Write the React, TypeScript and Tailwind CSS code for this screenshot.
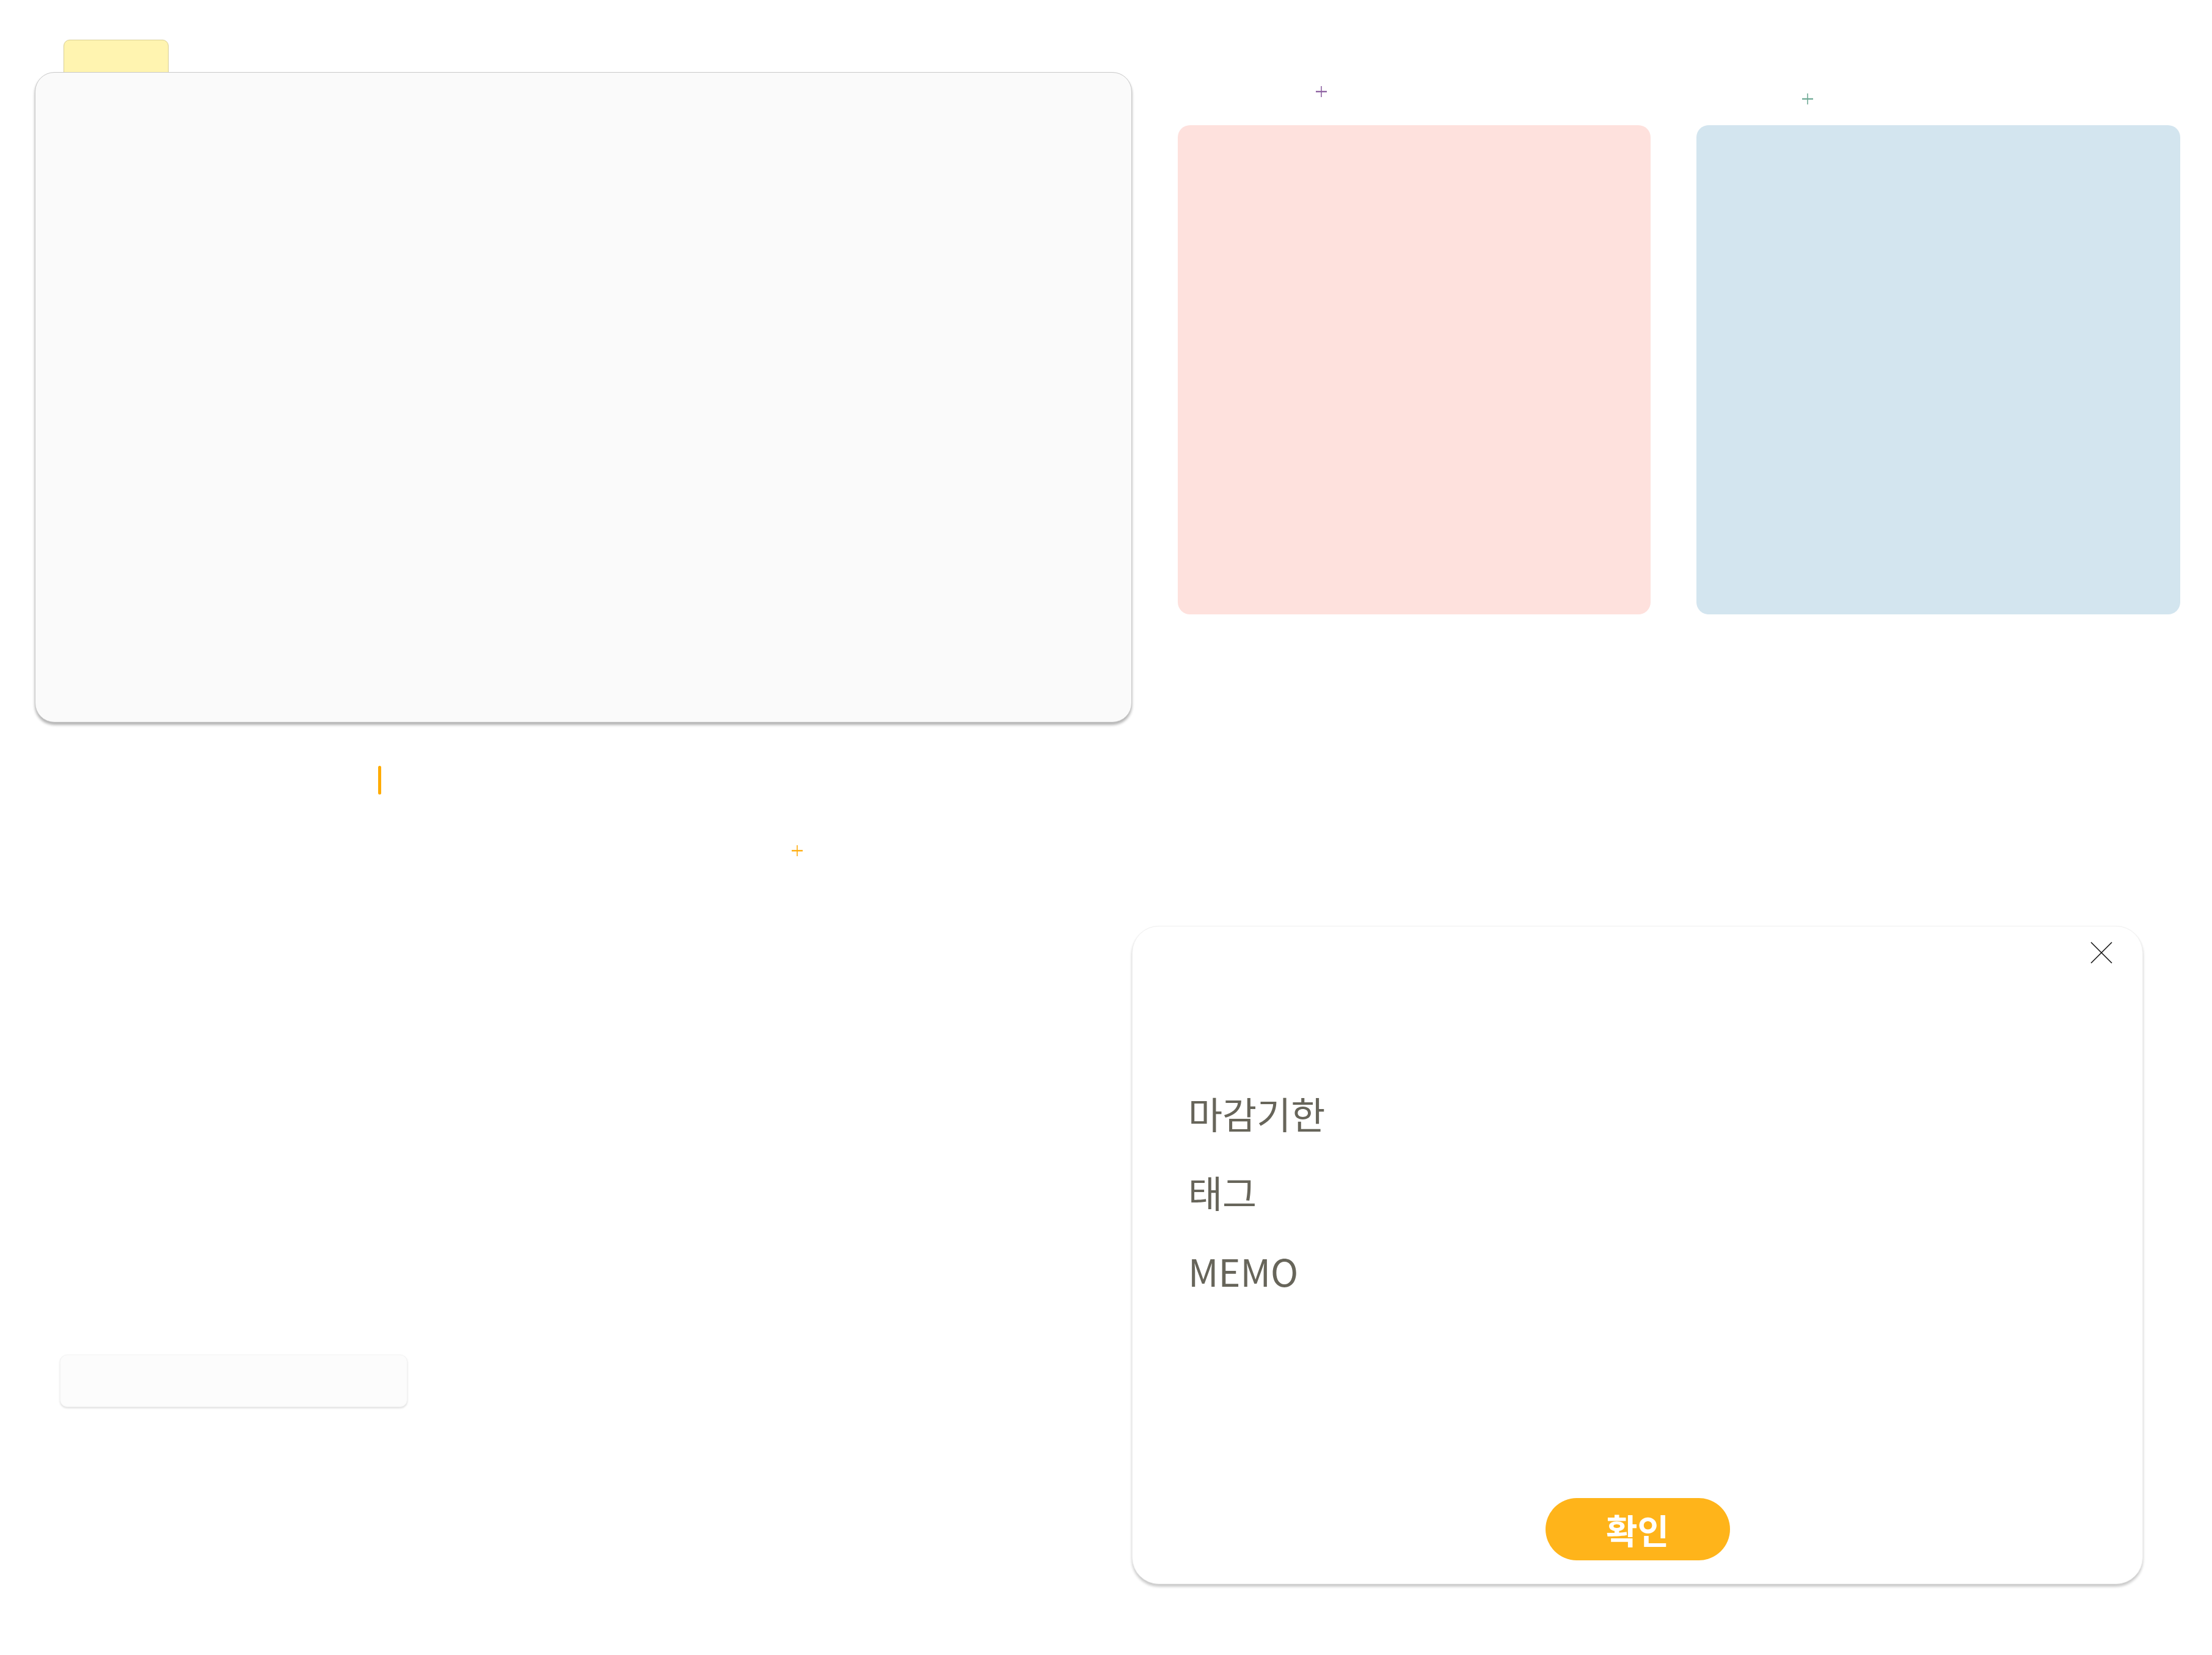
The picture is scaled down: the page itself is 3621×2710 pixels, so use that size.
import React from 'react';

const font = "font-['Noto_Sans_CJK_KR','Noto_Sans',sans-serif]";

const Plus: React.FC<{ color: string }> = ({ color }) => (
  <svg width="18" height="18" viewBox="0 0 18 18" className="block">
    <line x1="9" y1="0" x2="9" y2="18" stroke={color} strokeWidth="1.6" />
    <line x1="0" y1="9" x2="18" y2="9" stroke={color} strokeWidth="2.4" />
  </svg>
);

const CloseIcon: React.FC = () => (
  <svg width="36" height="36" viewBox="0 0 36 36" className="block">
    <line x1="1" y1="1" x2="35" y2="35" stroke="#111" strokeWidth="1.6" />
    <line x1="35" y1="1" x2="1" y2="35" stroke="#111" strokeWidth="1.6" />
  </svg>
);

const MemoModal: React.FC = () => (
  <div className="absolute left-[1853px] top-[1516px] w-[1655px] h-[1078px] bg-white rounded-[44px] border border-[#efefef] shadow-[0_4px_4px_rgba(0,0,0,0.22)] flex flex-col">
    <div className="flex justify-end pt-[25px] pr-[49px]">
      <button className="p-0">
        <CloseIcon />
      </button>
    </div>
    <div className="flex flex-col gap-[68px] pl-[91px] mt-[214px] text-[61px] leading-none text-[#67655a]">
      <span>마감기한</span>
      <span>태그</span>
      <span>MEMO</span>
    </div>
    <div className="mt-auto mb-[38px] flex justify-center">
      <button className="w-[302px] h-[102px] rounded-full bg-[#ffb41a] text-white text-[56px] font-bold leading-none flex items-center justify-center">
        확인
      </button>
    </div>
  </div>
);

const App: React.FC = () => {
  return (
    <div className={`relative w-[3621px] h-[2710px] bg-white overflow-hidden ${font}`}>
      <div className="flex items-start">
        {/* main board */}
        <div className="flex flex-col items-start pl-[57px] pt-[65px]">
          <div className="ml-[47px] w-[172px] h-[54px] -mb-px rounded-t-[10px] bg-[#fff4b0] border border-[#d9ce94]" />
          <div className="relative z-10 w-[1796px] h-[1065px] rounded-[32px] bg-[#fafafa] border border-[#c9c9c9] shadow-[0_4px_4px_rgba(0,0,0,0.3)]" />
          <div className="ml-[562px] mt-[71px] w-[5px] h-[47px] rounded-full bg-[#ffab00]" />
          <div className="ml-[1239px] mt-[83px]">
            <Plus color="#ffad0f" />
          </div>
          <div className="ml-[41px] mt-[816px] w-[569px] h-[86px] rounded-[12px] bg-[#fcfcfc] border border-[#f3f3f3] shadow-[0_2px_3px_rgba(0,0,0,0.12)]" />
        </div>

        {/* pink list */}
        <div className="flex flex-col items-start ml-[75px] pt-[141px]">
          <div className="ml-[226px]">
            <Plus color="#8f64a3" />
          </div>
          <div className="mt-[46px] w-[774px] h-[801px] rounded-[20px] bg-[#fee1dd]" />
        </div>

        {/* blue list */}
        <div className="flex flex-col items-start ml-[75px] pt-[153px]">
          <div className="ml-[173px]">
            <Plus color="#72ab98" />
          </div>
          <div className="mt-[34px] w-[792px] h-[801px] rounded-[20px] bg-[#d3e5ef]" />
        </div>
      </div>

      <MemoModal />
    </div>
  );
};

export default App;
